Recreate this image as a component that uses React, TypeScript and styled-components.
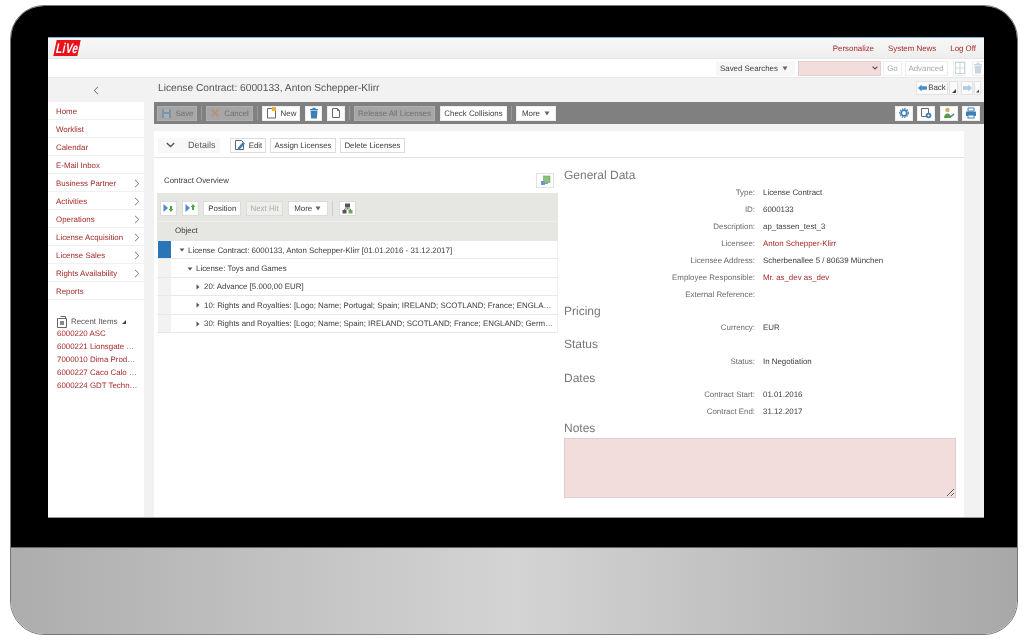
import React from 'react';
import styled, {createGlobalStyle} from "styled-components";

const GlobalStyle = createGlobalStyle`
  html, body {
    margin: 0;
    padding: 0;
    background: #fff;
    font-family: "Liberation Sans", Arial, sans-serif;
    text-rendering: geometricPrecision;
  }
  * {
    box-sizing: border-box;
  }
  button, textarea {
    text-rendering: geometricPrecision;
  }
`

const menuItems = [
    {label: 'Home'},
    {label: 'Worklist'},
    {label: 'Calendar'},
    {label: 'E-Mail Inbox'},
    {label: 'Business Partner', more: true},
    {label: 'Activities', more: true},
    {label: 'Operations', more: true},
    {label: 'License Acquisition', more: true},
    {label: 'License Sales', more: true},
    {label: 'Rights Availability', more: true},
    {label: 'Reports'},
];

const recentItems = [
    '6000220 ASC',
    '6000221 Lionsgate Entertainment',
    '7000010 Dima Productions',
    '6000227 Caco Calo Media',
    '6000224 GDT Technologies',
];

const treeRows = [
    {level: 0, open: true, selected: true, text: 'License Contract: 6000133, Anton Schepper-Klirr [01.01.2016 - 31.12.2017]'},
    {level: 1, open: true, text: 'License: Toys and Games'},
    {level: 2, text: '20: Advance [5.000,00 EUR]'},
    {level: 2, text: '10: Rights and Royalties: [Logo; Name; Portugal; Spain; IRELAND; SCOTLAND; France; ENGLAND; Germany; Italy]'},
    {level: 2, text: '30: Rights and Royalties: [Logo; Name; Spain; IRELAND; SCOTLAND; France; ENGLAND; Germany; Italy; Portugal]'},
];

const generalData = [
    {label: 'Type:', value: 'License Contract'},
    {label: 'ID:', value: '6000133'},
    {label: 'Description:', value: 'ap_tassen_test_3'},
    {label: 'Licensee:', value: 'Anton Schepper-Klirr', link: true},
    {label: 'Licensee Address:', value: 'Scherbenallee 5 / 80639 München'},
    {label: 'Employee Responsible:', value: 'Mr. as_dev as_dev', link: true},
    {label: 'External Reference:', value: ''},
];

const Chevron = () => (
    <svg width="6" height="9" viewBox="0 0 6 9"><path d="M1 .8 4.800 4.500 1 8.200" fill="none" stroke="#777" strokeWidth="1"/></svg>
);

const Caret = (props: { open?: boolean }) => (
    <TreeCaret width="6" height="6" viewBox="0 0 6 6">
        <path d={props.open ? "M.5 1.500h5L3 4.500z" : "M1.500.5v5L4.500 3z"} fill="#555"/>
    </TreeCaret>
);

const SmallDown = () => (
    <svg width="6" height="5" viewBox="0 0 6 5"><path d="M.5.5h5L3 4.500z" fill="#666"/></svg>
);

const SelectChevron = () => (
    <svg width="6" height="4" viewBox="0 0 6 4"><path d="M.6.6 3 3 5.400.6" fill="none" stroke="#555" strokeWidth="1.200"/></svg>
);

const Corner = () => (
    <svg width="4" height="4" viewBox="0 0 4 4"><path d="M4 0v4H0z" fill="#444"/></svg>
);

const SaveIcon = () => (
    <svg width="11" height="11" viewBox="0 0 11 11"><path d="M1 1h8l1 1v8H1z" fill="#7f93a5"/><path d="M3 1h5v3H3zM3 6h5v4H3z" fill="#a9b0b5"/></svg>
);

const CancelIcon = () => (
    <svg width="10" height="10" viewBox="0 0 10 10"><path d="M1.500 1.500l7 7M8.500 1.500l-7 7" stroke="#c08a78" strokeWidth="1.600"/></svg>
);

const NewIcon = () => (
    <svg width="11" height="12" viewBox="0 0 11 12"><path d="M1.500 1.500h6l2 2v7.500h-8z" fill="#fff" stroke="#666"/><rect x="6" y="0" width="4" height="4" fill="#f0b030"/></svg>
);

const TrashIcon = () => (
    <svg width="10" height="12" viewBox="0 0 10 12"><path d="M1 2h8v1H1zM3.500.7h3V2h-3z" fill="#3f7fb5"/><path d="M1.500 3.500h7l-.6 8h-5.800z" fill="#3f7fb5"/></svg>
);

const CopyIcon = () => (
    <svg width="11" height="12" viewBox="0 0 11 12"><path d="M1.500 1.500h5l2 2v7h-7z" fill="#fff" stroke="#666"/><path d="M6.500 1.500v2h2" fill="none" stroke="#666"/></svg>
);

const EditIcon = () => (
    <svg width="12" height="12" viewBox="0 0 12 12"><path d="M1.500 1.500h6l2 2v7h-8z" fill="#fff" stroke="#666"/><path d="M4 8.500l5-5.500 2 1.500-5 5.500-2.300.6z" fill="#3f7fb5"/></svg>
);

const DownIcon = (props: { up?: boolean }) => (
    <svg width="11" height="10" viewBox="0 0 11 10">
        <path d="M.5 1v8L5 5z" fill="#4a8fc4"/>
        <path d={props.up ? "M8 1l2.300 3H9v3H7V4H5.700z" : "M8 9l2.300-3H9V3H7v3H5.700z"} fill="#4aa83c"/>
    </svg>
);

const HierarchyIcon = () => (
    <svg width="11" height="11" viewBox="0 0 11 11"><rect x="3" y="0.500" width="5" height="4" fill="#555"/><path d="M5.500 4.500V6M2.500 7V6h6v1" fill="none" stroke="#777"/><rect x="0.500" y="7" width="4" height="3.500" fill="#555"/><rect x="6.500" y="7" width="4" height="3.500" fill="#6aa84f"/></svg>
);

const ExportIcon = () => (
    <svg width="11" height="11" viewBox="0 0 11 11"><rect x="3.500" y="1" width="6.500" height="6.500" fill="#8fc07c" stroke="#6f9f5e" strokeWidth=".6"/><rect x="1" y="6" width="4" height="4" fill="#6a9cc6"/><path d="M5 8.500h3" stroke="#6a9cc6"/></svg>
);

const GearIcon = () => (
    <svg width="10" height="10" viewBox="0 0 10 10"><circle cx="5" cy="5" r="2.800" fill="none" stroke="#3f7fb5" strokeWidth="1.800"/><circle cx="5" cy="5" r="4.300" fill="none" stroke="#3f7fb5" strokeWidth="1.200" strokeDasharray="1.500 1"/></svg>
);

const PageGearIcon = () => (
    <svg width="12" height="12" viewBox="0 0 12 12"><path d="M1.500 1.500h7v8h-7z" fill="#fff" stroke="#667"/><circle cx="8.500" cy="8.500" r="2.800" fill="#3f7fb5"/><circle cx="8.500" cy="8.500" r="1" fill="#fff"/></svg>
);

const PersonIcon = () => (
    <svg width="12" height="12" viewBox="0 0 12 12"><circle cx="4.500" cy="3" r="2.200" fill="#c9b26a"/><path d="M1 11c0-3 1.500-4.500 3.500-4.500S8 8 8 11z" fill="#5a9a48"/><path d="M7 9.500l3.500-3 1 1-3.500 3z" fill="#3f7fb5"/></svg>
);

const PrintIcon = () => (
    <svg width="12" height="12" viewBox="0 0 12 12"><path d="M3 1h6v3H3z" fill="#fff" stroke="#3f7fb5"/><rect x="1" y="4.500" width="10" height="4.500" fill="#3f7fb5"/><rect x="3" y="8" width="6" height="3" fill="#fff" stroke="#3f7fb5"/></svg>
);

const ArrowIcon = (props: { flip?: boolean; light?: boolean }) => (
    <svg width="9" height="8" viewBox="0 0 10 8">
        <path d={props.flip ? "M10 4L6 0v2H0v4h6v2z" : "M0 4l4-4v2h6v4H4v2z"} fill={props.light ? "#a9cbe4" : "#4a8fc4"}/>
    </svg>
);

const RecentIcon = () => (
    <svg width="11" height="12" viewBox="0 0 11 12"><path d="M3.500.5h5v2" fill="none" stroke="#666"/><path d="M.5 2.500h9v9h-9z" fill="#fff" stroke="#666"/><rect x="3" y="5" width="4" height="4" fill="#888"/></svg>
);

const PanelIcon = () => (
    <svg width="10" height="12" viewBox="0 0 10 12"><rect x="0.500" y="0.500" width="9" height="11" fill="none" stroke="#c9d6e0"/><path d="M5 .5v11M.5 6h9" stroke="#c9d6e0"/></svg>
);

const FaintTrashIcon = () => (
    <svg width="10" height="12" viewBox="0 0 10 12"><path d="M1 2h8v1H1zM3.500.7h3V2h-3z" fill="#c9d6e0"/><path d="M1.500 3.500h7l-.6 8h-5.800z" fill="#c9d6e0"/></svg>
);

const App = () => {
    return (
        <>
            <GlobalStyle/>
            <Monitor>
                <Bezel>
                    <Screen>
                        <Header>
                            <Logo><span>LiVe</span></Logo>
                            <HeaderLinks>
                                <HeaderLink>Personalize</HeaderLink>
                                <HeaderLink>System News</HeaderLink>
                                <HeaderLink>Log Off</HeaderLink>
                            </HeaderLinks>
                        </Header>
                        <SearchBar>
                            <SavedSearches>Saved Searches <SmallDown/></SavedSearches>
                            <SearchSelect><SelectChevron/></SearchSelect>
                            <FaintButton $width={19}>Go</FaintButton>
                            <FaintButton $width={43}>Advanced</FaintButton>
                            <FaintIconButton><PanelIcon/></FaintIconButton>
                            <FaintIconButton><FaintTrashIcon/></FaintIconButton>
                        </SearchBar>
                        <Body>
                            <Sidebar>
                                <Collapse>
                                    <svg width="6" height="9" viewBox="0 0 6 9"><path d="M5 .8 1.200 4.500 5 8.200" fill="none" stroke="#666"/></svg>
                                </Collapse>
                                {menuItems.map((item) => (
                                    <MenuItem key={item.label}>
                                        {item.label}
                                        {item.more && <Chevron/>}
                                    </MenuItem>
                                ))}
                                <Recent>
                                    <RecentTitle><RecentIcon/>Recent Items <Corner/></RecentTitle>
                                    {recentItems.map((item) => (
                                        <RecentLink key={item}>{item}</RecentLink>
                                    ))}
                                </Recent>
                            </Sidebar>
                            <Main>
                                <TitleBar>
                                    <PageTitle>License Contract: 6000133, Anton Schepper-Klirr</PageTitle>
                                    <NavGroup>
                                        <NavButton $width={32}><ArrowIcon/>Back</NavButton>
                                        <NavMenu $width={9}><Corner/></NavMenu>
                                        <NavButton $width={12}><ArrowIcon flip light/></NavButton>
                                        <NavMenu $width={7}><Corner/></NavMenu>
                                    </NavGroup>
                                </TitleBar>
                                <Toolbar>
                                    <ToolButton $width={40} disabled><SaveIcon/>Save</ToolButton>
                                    <Separator/>
                                    <ToolButton $width={47} disabled><CancelIcon/>Cancel</ToolButton>
                                    <Separator/>
                                    <ToolGroup>
                                        <ToolButton $width={38}><NewIcon/>New</ToolButton>
                                        <ToolButton $width={17}><TrashIcon/></ToolButton>
                                        <ToolButton $width={18}><CopyIcon/></ToolButton>
                                    </ToolGroup>
                                    <Separator/>
                                    <ToolGroup>
                                        <ToolButton $width={81} disabled>Release All Licenses</ToolButton>
                                        <ToolButton $width={67}>Check Collisions</ToolButton>
                                    </ToolGroup>
                                    <Separator/>
                                    <ToolButton $width={40}>More <SmallDown/></ToolButton>
                                    <ToolbarEnd>
                                        <ToolButton $width={18}><GearIcon/></ToolButton>
                                        <ToolButton $width={18}><PageGearIcon/></ToolButton>
                                        <ToolButton $width={18}><PersonIcon/></ToolButton>
                                        <ToolButton $width={18}><PrintIcon/></ToolButton>
                                    </ToolbarEnd>
                                </Toolbar>
                                <Panel>
                                    <DetailsBar>
                                        <DetailsToggle>
                                            <svg width="9" height="6" viewBox="0 0 9 6"><path d="M.8 1 4.500 4.500 8.200 1" fill="none" stroke="#555" strokeWidth="1.400"/></svg>
                                            Details
                                        </DetailsToggle>
                                        <PlainButton $width={36}><EditIcon/>Edit</PlainButton>
                                        <PlainButton $width={66}>Assign Licenses</PlainButton>
                                        <PlainButton $width={65}>Delete Licenses</PlainButton>
                                    </DetailsBar>
                                    <Columns>
                                        <Overview>
                                            <OverviewHead>
                                                Contract Overview
                                                <OverviewExport><ExportIcon/></OverviewExport>
                                            </OverviewHead>
                                            <TreeToolbar>
                                                <PlainButton $width={17}><DownIcon/></PlainButton>
                                                <PlainButton $width={17}><DownIcon up/></PlainButton>
                                                <PlainButton $width={38}>Position</PlainButton>
                                                <PlainButton $width={37} disabled>Next Hit</PlainButton>
                                                <PlainButton $width={40}>More <SmallDown/></PlainButton>
                                                <TreeSeparator/>
                                                <PlainButton $width={17}><HierarchyIcon/></PlainButton>
                                            </TreeToolbar>
                                            <TreeHead>
                                                <Selector $head/>
                                                <TreeHeadLabel>Object</TreeHeadLabel>
                                            </TreeHead>
                                            {treeRows.map((row) => (
                                                <TreeRow key={row.text}>
                                                    <Selector $selected={row.selected}/>
                                                    <TreeCell $level={row.level}>
                                                        <Caret open={row.open}/>
                                                        <TreeText>{row.text}</TreeText>
                                                    </TreeCell>
                                                </TreeRow>
                                            ))}
                                        </Overview>
                                        <Data>
                                            <SectionTitle>General Data</SectionTitle>
                                            {generalData.map((row) => (
                                                <Field key={row.label}>
                                                    <FieldLabel>{row.label}</FieldLabel>
                                                    <FieldValue $link={row.link}>{row.value}</FieldValue>
                                                </Field>
                                            ))}
                                            <SectionTitle>Pricing</SectionTitle>
                                            <Field>
                                                <FieldLabel>Currency:</FieldLabel>
                                                <FieldValue>EUR</FieldValue>
                                            </Field>
                                            <SectionTitle>Status</SectionTitle>
                                            <Field>
                                                <FieldLabel>Status:</FieldLabel>
                                                <FieldValue>In Negotiation</FieldValue>
                                            </Field>
                                            <SectionTitle>Dates</SectionTitle>
                                            <Field>
                                                <FieldLabel>Contract Start:</FieldLabel>
                                                <FieldValue>01.01.2016</FieldValue>
                                            </Field>
                                            <Field>
                                                <FieldLabel>Contract End:</FieldLabel>
                                                <FieldValue>31.12.2017</FieldValue>
                                            </Field>
                                            <SectionTitle>Notes</SectionTitle>
                                            <Notes readOnly/>
                                        </Data>
                                    </Columns>
                                </Panel>
                            </Main>
                        </Body>
                    </Screen>
                </Bezel>
                <Chin/>
            </Monitor>
        </>
    )
};

export default App;

const Monitor = styled.div`
  width: 1008px;
  height: 630px;
  margin: 5px 0 0 10px;
  border-radius: 34px;
  overflow: hidden;
  display: flex;
  flex-direction: column;
  border: 1px solid #777;
`

const Bezel = styled.div`
  height: 541px;
  background-color: #000;
  padding: 31px 33px 28px 37px;
`

const Screen = styled.div`
  width: 936px;
  height: 481px;
  background-color: #f2f2f2;
  border-top: 1px solid #7fb0d0;
  border-bottom: 1px solid #999;
  overflow: hidden;
  display: flex;
  flex-direction: column;
  font-size: 7.900px;
  color: #3c3c3c;
  filter: blur(0.35px);
`

const Chin = styled.div`
  flex: 1;
  border-top: 1px solid #666;
  background: linear-gradient(90deg, #adadad 0%, #bcbcbc 19%, #d4d4d4 50%, #b8b8b8 82%, #a8a8a8 100%);
`

const Header = styled.header`
  height: 21px;
  flex: none;
  display: flex;
  align-items: center;
  justify-content: space-between;
  padding: 0 8px 0 7px;
  background: linear-gradient(#f7f7f7, #eeeeee);
  border-bottom: 1px solid #e6e6e6;
`

const Logo = styled.div`
  width: 24px;
  height: 16px;
  background-color: #e8111c;
  transform: skewX(-12deg);
  display: flex;
  align-items: center;
  justify-content: center;

  span {
    color: #fff;
    font-size: 14px;
    font-weight: bold;
    transform: scaleX(.72);
    letter-spacing: .5px;
  }
`

const HeaderLinks = styled.nav`
  display: flex;
  gap: 14px;
`

const HeaderLink = styled.a`
  color: #a52a2a;
`

const SearchBar = styled.div`
  height: 19px;
  flex: none;
  display: flex;
  align-items: center;
  gap: 2.500px;
  padding-left: 668px;
  overflow: hidden;
  background-color: #fff;
  border-bottom: 1px solid #e8e8e8;
`

const SavedSearches = styled.div`
  height: 15px;
  width: 79px;
  flex: none;
  display: flex;
  align-items: center;
  justify-content: space-between;
  padding: 1px 7px 0 4px;
  background-color: #f7f7f7;
`

const SearchSelect = styled.div`
  width: 83px;
  height: 15px;
  flex: none;
  display: flex;
  align-items: center;
  justify-content: flex-end;
  padding-right: 2px;
  background-color: #f2dcdc;
  border: 1px solid #e5cdcd;
`

const FaintButton = styled.div<{ $width: number }>`
  width: ${props => props.$width}px;
  height: 15px;
  flex: none;
  display: flex;
  align-items: center;
  justify-content: center;
  padding-top: 1px;
  color: #aaa;
  border: 1px solid #eee;
`

const FaintIconButton = styled(FaintButton).attrs({$width: 13})`
  margin-left: 3px;
  padding-top: 0;
`

const Body = styled.div`
  flex: 1;
  display: flex;
  min-height: 0;
`

const Sidebar = styled.aside`
  width: 96px;
  flex: none;
  background-color: #fff;
`

const Collapse = styled.div`
  height: 24px;
  display: flex;
  align-items: center;
  justify-content: center;
  padding-top: 1px;
  background-color: #f2f2f2;
`

const MenuItem = styled.a`
  height: 18px;
  display: flex;
  align-items: center;
  justify-content: space-between;
  padding: 1px 4px 0 8px;
  color: #a52a2a;
  border-bottom: 1px solid #f0f0f0;
`

const Recent = styled.div`
  padding: 16px 0 0 9px;
`

const RecentTitle = styled.div`
  height: 11px;
  display: flex;
  align-items: center;
  gap: 3px;
  color: #555;

  svg:last-child {
    margin-left: 1px;
  }
`

const RecentLink = styled.a`
  display: block;
  width: 82px;
  height: 13px;
  line-height: 13px;
  color: #a52a2a;
  white-space: nowrap;
  overflow: hidden;
  text-overflow: ellipsis;
`

const Main = styled.main`
  flex: 1;
  min-width: 0;
  display: flex;
  flex-direction: column;
  padding-left: 10px;
`

const TitleBar = styled.div`
  height: 24px;
  flex: none;
  display: flex;
  align-items: center;
  justify-content: space-between;
  padding: 0 3px 5px 4px;
`

const PageTitle = styled.h1`
  margin: 0;
  padding-top: 2px;
  font-size: 10.200px;
  font-weight: normal;
  color: #555;
`

const NavGroup = styled.div`
  display: flex;
  gap: 1px;
`

const NavButton = styled.div<{ $width: number }>`
  width: ${props => props.$width}px;
  height: 14px;
  display: flex;
  align-items: center;
  justify-content: center;
  gap: 1px;
  color: #3c3c3c;
  background-color: #fafafa;
  border: 1px solid #e2e2e2;
`

const NavMenu = styled(NavButton)`
  align-items: flex-end;
  justify-content: flex-end;
  padding: 1px;

  &:nth-child(2) {
    margin-right: 2px;
  }
`

const Toolbar = styled.div`
  height: 22px;
  flex: none;
  display: flex;
  align-items: center;
  gap: 4px;
  padding: 0 4px 0 3px;
  background-color: #808080;
`

const ToolGroup = styled.div`
  display: flex;
  gap: 5px;
`

const ToolbarEnd = styled.div`
  margin-left: auto;
  display: flex;
  gap: 4.500px;
`

const ToolButton = styled.button<{ $width: number }>`
  width: ${props => props.$width}px;
  height: 15px;
  display: flex;
  align-items: center;
  justify-content: center;
  gap: 4px;
  padding: 0;
  font: inherit;
  font-size: 7.900px;
  color: ${props => props.disabled ? '#6f6f6f' : '#3c3c3c'};
  background-color: ${props => props.disabled ? '#a6a6a6' : '#fff'};
  border: 1px solid ${props => props.disabled ? '#b0b0b0' : '#eee'};
`

const Separator = styled.span`
  width: 1px;
  height: 14px;
  background-color: #9a9a9a;
`

const Panel = styled.section`
  flex: 1;
  min-height: 0;
  margin: 7px 20px 0 0;
  background-color: #fff;
`

const DetailsBar = styled.div`
  height: 27px;
  display: flex;
  align-items: center;
  gap: 4px;
  padding: 2px 0 0 4px;
  border-bottom: 1px solid #e4e4e4;
`

const DetailsToggle = styled.div`
  width: 62px;
  height: 15px;
  display: flex;
  align-items: center;
  gap: 13px;
  margin-right: 6px;
  padding-left: 8px;
  font-size: 9px;
  color: #555;
  background-color: #f8f8f8;
`

const PlainButton = styled.button<{ $width: number }>`
  width: ${props => props.$width}px;
  height: 15px;
  display: flex;
  align-items: center;
  justify-content: center;
  gap: 3px;
  padding: 0;
  font: inherit;
  font-size: 7.900px;
  color: ${props => props.disabled ? '#aaa' : '#3c3c3c'};
  background-color: ${props => props.disabled ? '#eeeeec' : '#fff'};
  border: 1px solid #dcdcdc;
`

const Columns = styled.div`
  display: flex;
  padding-left: 3px;
`

const Overview = styled.div`
  width: 401px;
  flex: none;
`

const OverviewHead = styled.div`
  height: 35px;
  display: flex;
  align-items: center;
  justify-content: space-between;
  padding: 9px 4px 0 7px;
`

const OverviewExport = styled.div`
  width: 18px;
  height: 15px;
  display: flex;
  align-items: center;
  justify-content: center;
  border: 1px solid #e2e2e2;
`

const TreeToolbar = styled.div`
  height: 28px;
  display: flex;
  align-items: center;
  gap: 4.700px;
  padding: 2px 0 0 3px;
  background-color: #e6e6e3;

  span + button {
    margin-left: 1px;
  }
`

const TreeSeparator = styled.span`
  width: 1px;
  height: 15px;
  background-color: #cfcfcf;
`

const TreeHead = styled.div`
  height: 20px;
  display: flex;
  background-color: #e6e6e3;
  border-top: 1px solid #eeeeec;
`

const TreeHeadLabel = styled.div`
  display: flex;
  align-items: center;
  padding: 0 0 2px 4px;
`

const Selector = styled.div<{ $selected?: boolean; $head?: boolean }>`
  width: 13px;
  flex: none;
  margin-left: 1px;
  background-color: ${props => props.$selected ? '#2a75b5' : props.$head ? '#e6e6e3' : '#f2f2f0'};
`

const TreeRow = styled.div`
  height: 18.400px;
  display: flex;
  border-right: 1px solid #eee;
  border-bottom: 1.500px solid #e8e8e8;
`

const TreeCell = styled.div<{ $level: number }>`
  flex: 1;
  min-width: 0;
  display: flex;
  align-items: center;
  padding: 1px 0 0 ${props => 8 + props.$level * 8}px;
`

const TreeCaret = styled.svg`
  flex: none;
  margin-right: 3px;
`

const TreeText = styled.span`
  flex: 1;
  min-width: 0;
  white-space: nowrap;
  overflow: hidden;
  text-overflow: ellipsis;
`

const Data = styled.div`
  width: 392px;
  margin-left: 6px;
  padding-top: 9px;
`

const SectionTitle = styled.h2`
  height: 16.500px;
  margin: 0;
  line-height: 16.500px;
  font-size: 12px;
  font-weight: normal;
  color: #777;
`

const Field = styled.div`
  height: 17px;
  display: flex;
  align-items: center;
  gap: 8px;
`

const FieldLabel = styled.span`
  width: 191px;
  flex: none;
  text-align: right;
  color: #6a6a6a;
`

const FieldValue = styled.span<{ $link?: boolean }>`
  color: ${props => props.$link ? '#a52a2a' : '#3c3c3c'};
`

const Notes = styled.textarea`
  display: block;
  width: 392px;
  height: 60px;
  margin-top: 1.500px;
  background-color: #f2dcdc;
  border: 1px solid #e5cdcd;
`
